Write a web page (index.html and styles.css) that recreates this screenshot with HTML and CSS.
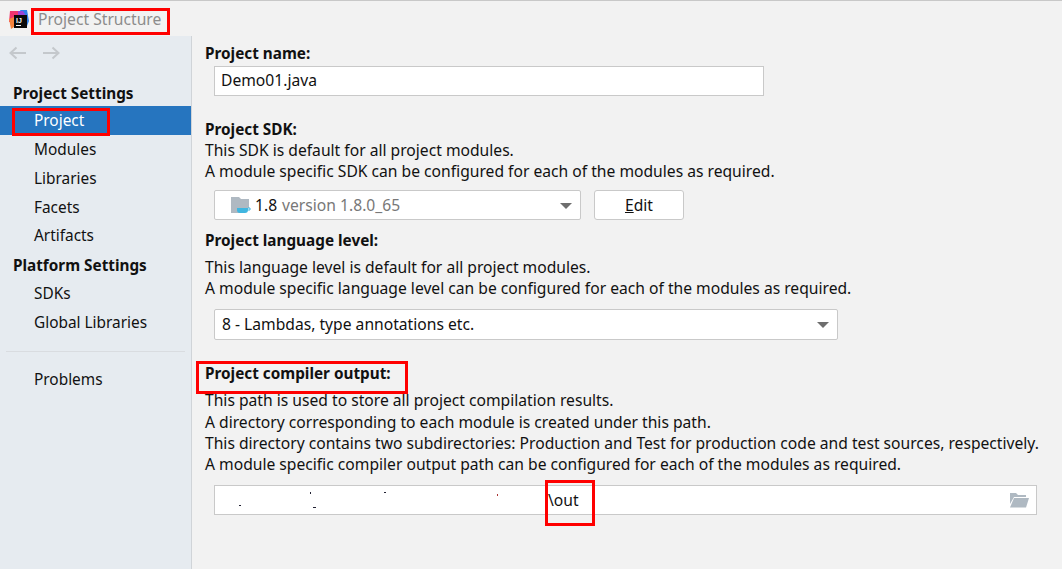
FILE: index.html
```html
<!DOCTYPE html>
<html lang="en">
<head>
    <meta charset="UTF-8">
    <meta name="viewport" content="width=device-width, initial-scale=1.0">
    <title>Project Structure</title>
    <link rel="stylesheet" href="styles.css">
</head>
<body>
    <div class="titlebar">
        <svg class="app-logo" width="20" height="20" viewBox="0 0 20 20">
            <path d="M1 1h9l3 4H6L3 12H0z" fill="#f0366f"/>
            <path d="M0 9l5-2v10l-3 2z" fill="#f7843d"/>
            <path d="M11 0h7l2 11-2 5z" fill="#2f7fea"/>
            <path d="M9 1h5l3 5H9z" fill="#9b45d8"/>
            <rect x="5" y="5" width="13" height="13" fill="#0a0a0a"/>
            <text class="logo-letters" x="7" y="12.500">IJ</text>
            <rect x="7" y="15" width="5" height="1" fill="#fff"/>
        </svg>
        <span class="title-text">Project Structure</span>
    </div>

    <div class="main">
        <div class="sidebar">
            <div class="nav-arrows">
                <svg width="18" height="14" viewBox="0 0 18 14"><path d="M17 7H1.500M7.500 1.500L1.500 7l6 5.500" fill="none" stroke="#c4c8cc" stroke-width="2"/></svg>
                <svg width="18" height="14" viewBox="0 0 18 14"><path d="M1 7h15.500M10.500 1.500l6 5.500-6 5.500" fill="none" stroke="#c4c8cc" stroke-width="2"/></svg>
            </div>
            <div class="side-heading first">Project Settings</div>
            <div class="side-item selected">Project</div>
            <div class="side-item">Modules</div>
            <div class="side-item">Libraries</div>
            <div class="side-item short">Facets</div>
            <div class="side-item">Artifacts</div>
            <div class="side-heading">Platform Settings</div>
            <div class="side-item">SDKs</div>
            <div class="side-item">Global Libraries</div>
            <div class="side-sep"></div>
            <div class="side-item">Problems</div>
        </div>

        <div class="content">
            <div class="label">Project name:</div>
            <div class="field name-field">Demo01.java</div>

            <div class="label sdk-label">Project SDK:</div>
            <div class="desc">This SDK is default for all project modules.</div>
            <div class="desc">A module specific SDK can be configured for each of the modules as required.</div>
            <div class="sdk-row">
                <div class="field combo sdk-combo">
                    <svg class="sdk-icon" width="20" height="18" viewBox="0 0 20 18">
                        <path d="M0 1h8l2 2h8v9h-6v5H0z" fill="#afb9c2"/>
                        <path d="M6 12h11v2a3 3 0 0 1-3 3H9a3 3 0 0 1-3-3z" fill="#40b6e0"/>
                        <path d="M17 12h2v2h-2" fill="none" stroke="#40b6e0"/>
                    </svg>
                    <span>1.8</span><span class="muted">version 1.8.0_65</span>
                    <span class="arrow"></span>
                </div>
                <div class="btn"><u>E</u>dit</div>
            </div>

            <div class="label lang-label">Project language level:</div>
            <div class="desc lang-desc">This language level is default for all project modules.</div>
            <div class="desc">A module specific language level can be configured for each of the modules as required.</div>
            <div class="field combo lang-combo">
                <span>8 - Lambdas, type annotations etc.</span>
                <span class="arrow"></span>
            </div>

            <div class="label out-label">Project compiler output:</div>
            <div class="desc out-desc">This path is used to store all project compilation results.</div>
            <div class="desc">A directory corresponding to each module is created under this path.</div>
            <div class="desc">This directory contains two subdirectories: Production and Test for production code and test sources, respectively.</div>
            <div class="desc">A module specific compiler output path can be configured for each of the modules as required.</div>
            <div class="field out-field">
                <!-- leftovers of the blanked out path -->
                <svg class="specks" width="300" height="28" viewBox="0 0 300 28">
                    <rect x="24" y="19" width="2" height="1" fill="#223"/>
                    <rect x="95" y="6" width="1" height="2" fill="#223"/>
                    <rect x="98" y="21" width="3" height="1" fill="#223"/>
                    <rect x="169" y="6" width="2" height="1" fill="#223"/>
                    <rect x="282" y="8" width="1" height="2" fill="#a33"/>
                </svg>
                <span class="path-text">\out</span>
                <svg class="folder-icon" width="19" height="15" viewBox="0 0 19 15">
                    <path d="M0 0h6l2 2h8v2H4L0 11z" fill="#afb9c2"/>
                    <path d="M4 5h15l-3 9.500H0z" fill="#afb9c2"/>
                </svg>
            </div>
        </div>
    </div>

    <!-- red annotations drawn over the screenshot -->
    <div class="mark mark-title"></div>
    <div class="mark mark-project"></div>
    <div class="mark mark-compiler"></div>
    <div class="mark mark-out"></div>
</body>
</html>
```
FILE: styles.css
```css
html, body {
    height: 100%;
}

body {
    margin: 0;
    position: relative;
    display: flex;
    flex-direction: column;
    overflow: hidden;
    background: #f2f2f2;
    color: #111;
    font-family: "Noto Sans", "Open Sans", sans-serif;
    font-size: 15.65px;
    line-height: 21px;
}

.titlebar {
    height: 36px;
    box-sizing: border-box;
    border-top: 1px solid #c8c8c8;
    display: flex;
    align-items: center;
    padding: 2px 0 0 9px;
    gap: 9px;
    background: #f2f2f2;
}

.logo-letters {
    font-family: "Liberation Sans", sans-serif;
    font-size: 7px;
    font-weight: bold;
    fill: #fff;
}

.title-text {
    color: #8c8c8c;
}

.main {
    flex: 1;
    display: flex;
}

.sidebar {
    width: 192px;
    box-sizing: border-box;
    background: #e6ebf0;
    border-right: 1px solid #d0d4d8;
    font-size: 15.4px;
}

.nav-arrows {
    display: flex;
    gap: 15px;
    box-sizing: border-box;
    padding: 10px 0 0 9px;
    height: 32px;
    align-items: flex-start;
}

.side-heading {
    font-weight: bold;
    font-size: 15.3px;
    padding: 2px 0 0 13px;
    height: 29px;
    box-sizing: border-box;
    line-height: 27px;
}

.side-heading.first {
    margin-top: 11px;
    padding-top: 0;
    height: 27px;
    line-height: 29px;
}

.side-item {
    height: 29px;
    line-height: 29px;
    padding-left: 34px;
}

.side-item.short {
    height: 28px;
}

.side-item.selected {
    background: #2675bf;
    color: #fff;
}

.side-sep {
    height: 1px;
    margin: 14px 6px 13px;
    background: #d9dce0;
}

.content {
    flex: 1;
    padding: 6px 0 0 13px;
    min-width: 0;
}

.label {
    font-weight: bold;
    font-size: 15.3px;
    height: 21px;
    line-height: 23px;
}

.desc {
    height: 21px;
    line-height: 23px;
    white-space: nowrap;
}

.field {
    box-sizing: border-box;
    background: #fff;
    border: 1px solid #c9c9c9;
    margin-left: 9px;
    padding-left: 7px;
}

.name-field {
    width: 550px;
    height: 30px;
    line-height: 26px;
    margin-top: 3px;
    padding-left: 6px;
}

.sdk-label {
    margin-top: 22px;
}

.sdk-row {
    display: flex;
    gap: 13px;
    margin: 9px 0 0 9px;
}

.combo {
    position: relative;
    display: flex;
    align-items: center;
    border-radius: 2px;
}

.sdk-combo {
    width: 367px;
    height: 30px;
    margin-left: 0;
    padding-left: 16px;
    gap: 5px;
}

.sdk-icon {
    margin-right: -1px;
}

.muted {
    color: #787878;
}

.arrow {
    position: absolute;
    right: 8px;
    top: 12px;
    border-left: 6px solid transparent;
    border-right: 6px solid transparent;
    border-top: 6px solid #6e6e6e;
}

.btn {
    box-sizing: border-box;
    width: 90px;
    height: 30px;
    line-height: 28px;
    text-align: center;
    background: #fff;
    border: 1px solid #c9c9c9;
    border-radius: 3px;
}

.lang-label {
    margin-top: 9px;
}

.lang-desc {
    margin-top: 6px;
}

.lang-combo {
    width: 624px;
    height: 31px;
    margin-top: 11px;
}

.out-label {
    margin-top: 22px;
}

.out-desc {
    margin-top: 6px;
    height: 22px;
}

.out-field {
    position: relative;
    width: 823px;
    height: 30px;
    line-height: 26px;
    margin-top: 11px;
    display: flex;
    align-items: center;
    justify-content: space-between;
    padding: 0 7px 0 333px;
}

.specks {
    position: absolute;
    left: 0;
    top: 0;
}

.mark {
    position: absolute;
    box-sizing: border-box;
    border: 3px solid #f00;
}

.mark-title {
    left: 31px;
    top: 8px;
    width: 139px;
    height: 27px;
}

.mark-project {
    left: 12px;
    top: 108px;
    width: 98px;
    height: 28px;
}

.mark-compiler {
    left: 196px;
    top: 361px;
    width: 212px;
    height: 33px;
}

.mark-out {
    left: 545px;
    top: 480px;
    width: 50px;
    height: 46px;
}
```
